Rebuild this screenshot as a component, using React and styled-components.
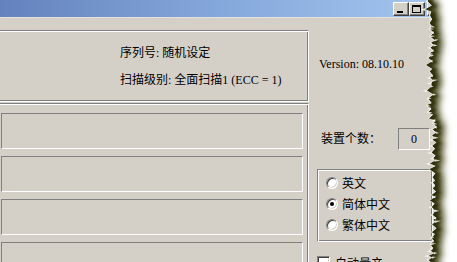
import React from 'react'
import styled, { createGlobalStyle, css } from 'styled-components'

const GlobalStyle = createGlobalStyle`
  html, body {
    margin: 0;
    padding: 0;
    background: #fff;
  }
  body {
    width: 457px;
    height: 262px;
    overflow: hidden;
  }
`

// classic win32 edges
const etched = css`
  border: 1px solid;
  border-color: #808080 #fff #fff #808080;
  box-shadow: inset 1px 1px 0 #fff, inset -1px -1px 0 #808080;
`

const staticEdge = css`
  border: 1px solid;
  border-color: #808080 #fff #fff #808080;
`

// torn paper edge, generated once with a fixed seed
const makeRand = seed => {
  let s = seed
  return () => {
    s = (s * 16807) % 2147483647
    return s / 2147483647
  }
}

// x is local to the 44px overlay (0 = page x 413)
const basePoints = [
  [0, 16], [18, 18], [40, 20], [60, 17], [85, 20], [105, 16], [122, 21],
  [150, 21], [170, 21], [200, 21], [230, 21], [250, 19], [264, 18],
]

const baseAt = y => {
  for (let i = 0; i < basePoints.length - 1; i++) {
    const [y0, x0] = basePoints[i]
    const [y1, x1] = basePoints[i + 1]
    if (y <= y1) return x0 + ((x1 - x0) * (y - y0)) / (y1 - y0)
  }
  return basePoints[basePoints.length - 1][1]
}

const pt = (x, y) => `${x.toFixed(1)} ${y.toFixed(1)}`

const buildEdge = () => {
  const rand = makeRand(91)
  const pts = []
  let y = -2
  let i = 0
  while (y < 266) {
    const notch = rand() < 0.12 ? -2.5 : 0
    const x = baseAt(y) + (i % 2 ? -1 : 1) * (0.6 + rand() * 2) + notch
    pts.push([x, y])
    y += 1.6 + rand() * 2.6
    i++
  }
  pts.push([baseAt(266), 266])
  const line = pts.map(([x, yy]) => pt(x, yy)).join(' L ')
  const fringe = pts.map(([x, yy]) => pt(x - 0.5 - rand() * 1.4, yy))
  const inward = []
  const outward = []
  pts.forEach(([x, yy]) => {
    const r = rand()
    if (r < 0.3) {
      const len = 2 + rand() * 3
      inward.push(`M ${pt(x, yy - 1)} L ${pt(x - len, yy + 0.5)} L ${pt(x, yy + 1.5)} Z`)
    } else if (r < 0.55) {
      const len = 2 + rand() * 4
      outward.push(`M ${pt(x - 0.5, yy - 1.2)} L ${pt(x + len, yy + (rand() - 0.5) * 2)} L ${pt(x - 0.5, yy + 1.2)} Z`)
    }
  })
  return {
    outside: `M 60 -4 L ${line} L 60 270 Z`,
    paper: `M -30 -4 L ${line} L -30 270 Z`,
    fringe: `M ${line} L ${fringe.reverse().join(' L ')} Z`,
    inward: inward.join(' '),
    outward: outward.join(' '),
  }
}

const edge = buildEdge()

const TornEdge = () => (
  <TornLayer width="44" height="262" viewBox="0 0 44 262">
    <defs>
      <filter id="tornBlurSoft" x="-50%" y="-10%" width="200%" height="120%">
        <feGaussianBlur stdDeviation="3.2" />
      </filter>
      <filter id="tornBlurHard" x="-50%" y="-10%" width="200%" height="120%">
        <feGaussianBlur stdDeviation="1.4" />
      </filter>
      <clipPath id="tornOutside">
        <path d={edge.outside} />
      </clipPath>
    </defs>
    <path d={edge.outside} fill="#fff" />
    <g clipPath="url(#tornOutside)">
      <path d={edge.paper} transform="translate(10 2)" fill="#55552a" filter="url(#tornBlurSoft)" />
      <path d={edge.paper} transform="translate(5 1)" fill="#2e2e0e" filter="url(#tornBlurHard)" />
    </g>
    <path d={edge.outward} fill="#dcdbd0" />
    <path d={edge.fringe} fill="#ebeae2" />
    <path d={edge.inward} fill="#f3f2ec" />
  </TornLayer>
)

const CaptionButton = ({ kind }) => (
  <CaptionBtn $gap={kind === 'close'}>
    {kind === 'min' && <MinGlyph />}
    {kind === 'max' && <MaxGlyph />}
    {kind === 'close' && (
      <svg width="8" height="7" viewBox="0 0 8 7">
        <path d="M0 0 L8 7 M8 0 L0 7" stroke="#000" strokeWidth="1.6" />
      </svg>
    )}
  </CaptionBtn>
)

const RadioOption = ({ label, checked }) => (
  <RadioRow>
    <RadioCircle $checked={checked} />
    <span>{label}</span>
  </RadioRow>
)

const App = () => {
  const inputRows = [0, 1, 2, 3]

  return (
    <>
      <GlobalStyle />
      <Window>
        <TitleBar>
          <CaptionButton kind="min" />
          <CaptionButton kind="max" />
          <CaptionButton kind="close" />
        </TitleBar>
        <Body>
          <LeftColumn>
            <InfoPanel>
              <InfoLine>序列号: 随机设定</InfoLine>
              <InfoLine>扫描级别: 全面扫描1 (ECC = 1)</InfoLine>
            </InfoPanel>
            <SlotFrame>
              {inputRows.map(i => (
                <SlotBox key={i} />
              ))}
            </SlotFrame>
          </LeftColumn>
          <RightColumn>
            <Version>Version: 08.10.10</Version>
            <DeviceRow>
              <DeviceLabel>装置个数：</DeviceLabel>
              <CountBox>0</CountBox>
            </DeviceRow>
            <RadioGroup>
              <RadioOption label="英文" />
              <RadioOption label="简体中文" checked />
              <RadioOption label="繁体中文" />
            </RadioGroup>
            <CheckRow>
              <CheckSquare />
              <span>自动量产</span>
            </CheckRow>
          </RightColumn>
        </Body>
        <TornEdge />
      </Window>
    </>
  )
}

const Window = styled.div`
  position: relative;
  width: 457px;
  height: 262px;
  overflow: hidden;
  background: #d4d0c8;
  font-family: "Liberation Serif", "Noto Sans CJK SC", serif;
  font-size: 12px;
  color: #000;
`

const TitleBar = styled.div`
  height: 18px;
  box-sizing: border-box;
  display: flex;
  align-items: flex-start;
  justify-content: flex-end;
  padding: 2px 14px 0 0;
  background: linear-gradient(90deg, #6482be 0%, #86a9dc 50%, #a6c8f0 100%);
  border-bottom: 1px solid #e4e2dc;
`

const CaptionBtn = styled.div`
  width: 16px;
  height: 14px;
  box-sizing: border-box;
  margin-left: ${p => (p.$gap ? '2px' : '0')};
  background: #d4d0c8;
  border: 1px solid;
  border-color: #fff #404040 #404040 #fff;
  box-shadow: inset -1px -1px 0 #808080;
  display: flex;
  align-items: center;
  justify-content: center;
`

const MinGlyph = styled.div`
  width: 6px;
  height: 2px;
  background: #000;
  margin: 6px 2px 0 0;
`

const MaxGlyph = styled.div`
  width: 9px;
  height: 8px;
  box-sizing: border-box;
  border: 1px solid #000;
  border-top-width: 2px;
  margin-right: 1px;
`

const Body = styled.div`
  display: flex;
  padding-top: 12px;
`

const LeftColumn = styled.div`
  flex: none;
  width: 314px;
  margin-left: -5px;
  display: flex;
  flex-direction: column;
  gap: 1px;
`

const InfoPanel = styled.div`
  ${etched};
  height: 72px;
  box-sizing: border-box;
  padding: 14px 0 0 124px;
  display: flex;
  flex-direction: column;
  gap: 11px;
`

const InfoLine = styled.div`
  line-height: 16px;
  white-space: nowrap;
`

const SlotFrame = styled.div`
  ${etched};
  height: 200px;
  box-sizing: border-box;
  padding: 9px 5px 0 5px;
  display: flex;
  flex-direction: column;
  gap: 7px;
`

const SlotBox = styled.div`
  ${staticEdge};
  flex: none;
  height: 36px;
  box-sizing: border-box;
`

const RightColumn = styled.div`
  flex: 1;
  padding: 26px 0 0 8px;
  display: flex;
  flex-direction: column;
  align-items: flex-start;
`

const Version = styled.div`
  margin-left: 2px;
  line-height: 16px;
  white-space: nowrap;
`

const DeviceRow = styled.div`
  margin-top: 56px;
  height: 22px;
  display: flex;
  align-items: center;
`

const DeviceLabel = styled.span`
  width: 77px;
  margin-left: 4px;
  line-height: 16px;
  white-space: nowrap;
`

const CountBox = styled.div`
  ${staticEdge};
  width: 32px;
  height: 22px;
  box-sizing: border-box;
  display: flex;
  align-items: center;
  justify-content: center;
`

const RadioGroup = styled.div`
  ${etched};
  margin-top: 19px;
  width: 116px;
  height: 73px;
  box-sizing: border-box;
  padding: 2px 0 4px 8px;
  display: flex;
  flex-direction: column;
`

const RadioRow = styled.div`
  height: 21px;
  display: flex;
  align-items: center;
  gap: 4px;
  white-space: nowrap;
`

const RadioCircle = styled.div`
  width: 12px;
  height: 12px;
  box-sizing: border-box;
  border-radius: 50%;
  background: #fff;
  border: 1px solid;
  border-color: #808080 #fff #fff #808080;
  box-shadow: inset 1px 1px 0 #404040, inset -1px -1px 0 #d4d0c8;
  display: flex;
  align-items: center;
  justify-content: center;

  &::after {
    content: "";
    display: ${p => (p.$checked ? 'block' : 'none')};
    width: 4px;
    height: 4px;
    border-radius: 50%;
    background: #000;
  }
`

const CheckRow = styled.div`
  margin-top: 14px;
  height: 13px;
  display: flex;
  align-items: center;
  gap: 5px;
  white-space: nowrap;
`

const CheckSquare = styled.div`
  width: 13px;
  height: 13px;
  box-sizing: border-box;
  background: #fff;
  border: 1px solid;
  border-color: #808080 #fff #fff #808080;
  box-shadow: inset 1px 1px 0 #404040, inset -1px -1px 0 #d4d0c8;
`

const TornLayer = styled.svg`
  position: absolute;
  top: 0;
  right: 0;
  display: block;
`

export default App
